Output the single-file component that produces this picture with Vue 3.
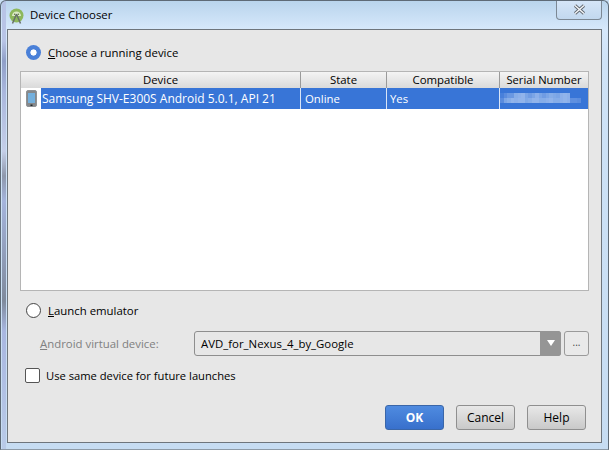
<script setup>
const columns = [
  { name: 'Device', cls: 'c1' },
  { name: 'State', cls: 'c2' },
  { name: 'Compatible', cls: 'c3' },
  { name: 'Serial Number', cls: 'c4' }
]
const mosaic = [
  [.15,.3,.45,.45,.7,.75,.8,.6,.5,.6,.75,.6,.5,.6,.7,.65,.6,.75,.8,.75,0,0,0],
  [.3,.6,.7,.8,.75,.8,.8,.65,.7,.8,.8,.7,.7,.75,.8,.7,.7,.75,.8,.75,.35,.35,.3]
]
</script>

<template>
  <div class="window">
    <header class="titlebar">
      <svg class="logo" width="15" height="16" viewBox="0 0 15 16">
        <circle cx="7.5" cy="7.5" r="7" fill="#8db85c" />
        <path d="M3 8a4.5 4.5 0 0 1 9 0z" fill="#dbe9c6" />
        <circle cx="5.6" cy="6.2" r=".7" fill="#5c7a3a" />
        <circle cx="9.4" cy="6.2" r=".7" fill="#5c7a3a" />
        <path d="M7.5 6 3.5 15.5M7.5 6l4 9.5" stroke="#67716a" stroke-width="1.5" fill="none" />
      </svg>
      <span class="title">Device Chooser</span>
      <button class="close" aria-label="Close">
        <svg width="13" height="11" viewBox="0 0 13 11">
          <path d="M2 1.5l9 8M11 1.5l-9 8" stroke="#5f666e" stroke-width="3.2" fill="none" />
          <path d="M2 1.5l9 8M11 1.5l-9 8" stroke="#f6f8fa" stroke-width="1.4" fill="none" />
        </svg>
      </button>
    </header>

    <main class="client">
      <label class="radio-row first">
        <span class="radio on"></span>
        <span><u>C</u>hoose a running device</span>
      </label>

      <section class="table">
        <div class="thead">
          <div v-for="c in columns" :key="c.name" class="th" :class="c.cls">{{ c.name }}</div>
        </div>
        <div class="row">
          <div class="phone-cell">
            <svg width="11" height="17" viewBox="0 0 11 17">
              <rect x="0.5" y="0.5" width="10" height="16" rx="1.5" fill="#85888b" stroke="#8f9295" />
              <rect x="2" y="3" width="7" height="10" fill="#74b0dd" />
              <rect x="4.5" y="14.5" width="2" height="1.5" fill="#22262a" />
            </svg>
          </div>
          <div class="td first-td">Samsung SHV-E300S Android 5.0.1, API 21</div>
          <div class="td c2">Online</div>
          <div class="td c3">Yes</div>
          <div class="td c4">
            <div class="mosaic">
              <div v-for="(line, i) in mosaic" :key="i" class="mline">
                <i v-for="(a, j) in line" :key="j" :style="{ opacity: a }"></i>
              </div>
            </div>
          </div>
        </div>
      </section>

      <label class="radio-row second">
        <span class="radio"></span>
        <span><u>L</u>aunch emulator</span>
      </label>

      <div class="avd-row">
        <span class="avd-label"><u>A</u>ndroid virtual device:</span>
        <div class="combo">
          <span class="combo-text">AVD_for_Nexus_4_by_Google</span>
          <span class="combo-arrow"><b></b></span>
        </div>
        <button class="dots">...</button>
      </div>

      <label class="check-row">
        <span class="check"></span>
        <span>Use same device for future launches</span>
      </label>

      <footer class="buttons">
        <button class="btn primary">OK</button>
        <button class="btn">Cancel</button>
        <button class="btn">Help</button>
      </footer>
    </main>
  </div>
</template>

<style>
html, body { margin: 0; background: #c9dff3; }
</style>

<style scoped>
.window {
  width: 609px;
  height: 450px;
  box-sizing: border-box;
  display: flex;
  flex-direction: column;
  font-family: "Open Sans", "Noto Sans", sans-serif;
  font-size: 11.4px;
  color: #000;
  overflow: hidden;
  border-radius: 6px 6px 0 0;
  border: 1px solid #5e6a76;
  border-bottom-color: #8d9aa6;
  background:
    linear-gradient(180deg, #b8c4e6 0 40px, #8f9fc8 60px, #a9b6dc 90px, #c5cfe8 150px, #8e98ac 175px, #a5b4dc 200px, #7f8a9c 300px, #a8b6e0 330px, #b9cbe8 100%) 1px 0 / 4px 100% no-repeat,
    linear-gradient(180deg, #b9d4ec 0, #d6e8fb 28px, #cfe3f7 60px, #c6dcf2 100%);
}
.titlebar {
  height: 28px;
  flex: none;
  display: flex;
  align-items: center;
  padding: 0 0 0 8px;
  position: relative;
}
.logo { margin-right: 6px; margin-top: 1px; }
.title { margin-top: -1px; }
.close {
  position: absolute;
  right: 6px;
  top: -1px;
  width: 46px;
  height: 20px;
  padding: 0;
  border: 1px solid #7c8894;
  border-top: none;
  border-radius: 0 0 4px 4px;
  background: linear-gradient(180deg, #d6e6f8, #c2d8ee);
  display: flex;
  align-items: center;
  justify-content: center;
}
.client {
  flex: 1;
  margin: 0 6px 6px 6px;
  border: 1px solid #6e757c;
  background: #e7e7e7;
  display: flex;
  flex-direction: column;
  padding: 0 12px 0 12px;
  min-height: 0;
}
.radio-row {
  display: flex;
  align-items: center;
  gap: 7px;
  height: 18px;
  padding-left: 6px;
}
.radio-row.first { margin-top: 13px; }
.radio-row.second { margin-top: 10px; }
.radio {
  width: 13px;
  height: 13px;
  border: 1px solid #444;
  border-radius: 50%;
  background: #fff;
  flex: none;
}
.radio.on {
  width: 15px;
  height: 15px;
  border: none;
  background: radial-gradient(circle, #fff 0 2.8px, #4a80d8 3.4px);
}
u { text-decoration-thickness: 1px; text-underline-offset: 1px; }

.table {
  margin-top: 10px;
  height: 220px;
  box-sizing: border-box;
  border: 1px solid #b5b5b5;
  background: #fff;
  flex: none;
}
.thead {
  height: 16px;
  display: flex;
  background: linear-gradient(180deg, #f4f4f4, #dadada);
}
.th {
  text-align: center;
  line-height: 16px;
  box-sizing: border-box;
  border-right: 1px solid #9a9a9a;
  white-space: nowrap;
  overflow: hidden;
}
.th:last-child { border-right: none; font-size: 11.2px; }
.c1 { width: 280px; }
.c2 { width: 86px; }
.c3 { width: 113px; }
.c4 { width: 88px; }
.row {
  height: 21px;
  display: flex;
  color: #fff;
  background: linear-gradient(90deg, #fff 20px, #3875d7 20px);
}
.phone-cell {
  width: 20px;
  flex: none;
  display: flex;
  align-items: center;
  justify-content: center;
}
.td {
  box-sizing: border-box;
  line-height: 21px;
  padding-left: 4px;
  border-right: 1px solid #d8e4f6;
  white-space: nowrap;
  overflow: hidden;
  font-size: 12px;
}
.td.c2 { font-size: 11.4px; }
.td.c3 { font-size: 11.4px; padding-left: 3px; }
.td:last-child { border-right: none; padding-left: 0; }
.first-td { width: 260px; padding-left: 1px; }
.mosaic { margin-top: 5px; }
.mline { display: flex; height: 5px; }
.mline i { width: 3.5px; height: 5px; background: #a8c4f0; display: block; }

.avd-row {
  display: flex;
  align-items: center;
  margin-top: 11px;
  padding-left: 20px;
  height: 26px;
}
.avd-label { width: 154px; color: #808080; flex: none; }
.combo {
  width: 367px;
  height: 25px;
  box-sizing: border-box;
  border: 1px solid #8e8e8e;
  border-radius: 3px;
  background: #e7e7e7;
  display: flex;
  align-items: center;
  flex: none;
}
.combo-text { flex: 1; padding-left: 6px; }
.combo-arrow {
  width: 21px;
  height: 25px;
  margin-right: -1px;
  background: #959595;
  border-radius: 0 3px 3px 0;
  display: flex;
  align-items: center;
  justify-content: center;
}
.combo-arrow b {
  border-left: 4px solid transparent;
  border-right: 4px solid transparent;
  border-top: 6px solid #fff;
}
.dots {
  width: 25px;
  height: 25px;
  margin-left: 3px;
  padding: 0 0 3px;
  border: 1px solid #9a9a9a;
  border-radius: 3px;
  background: #e9e9e9;
  font: 10px "Open Sans", sans-serif;
  color: #444;
  flex: none;
}
.check-row {
  display: flex;
  align-items: center;
  gap: 6px;
  margin-top: 10px;
  padding-left: 5px;
  height: 18px;
  font-size: 11.2px;
}
.check {
  width: 13px;
  height: 13px;
  border: 1px solid #555;
  border-radius: 2px;
  background: #fff;
  flex: none;
}
.buttons {
  margin-top: auto;
  margin-bottom: 12px;
  display: flex;
  justify-content: flex-end;
  gap: 12px;
  padding-right: 3px;
}
.btn {
  width: 59px;
  height: 25px;
  padding: 0;
  border: 1px solid #8f8f8f;
  border-radius: 3px;
  background: linear-gradient(180deg, #e8e8e8, #c9c9c9);
  font: 12px "Open Sans", "Noto Sans", sans-serif;
  color: #000;
}
.btn.primary {
  border-color: #3a66a8;
  background: linear-gradient(180deg, #4f8be0, #3870cc);
  color: #fff;
  font-weight: 700;
}
</style>
